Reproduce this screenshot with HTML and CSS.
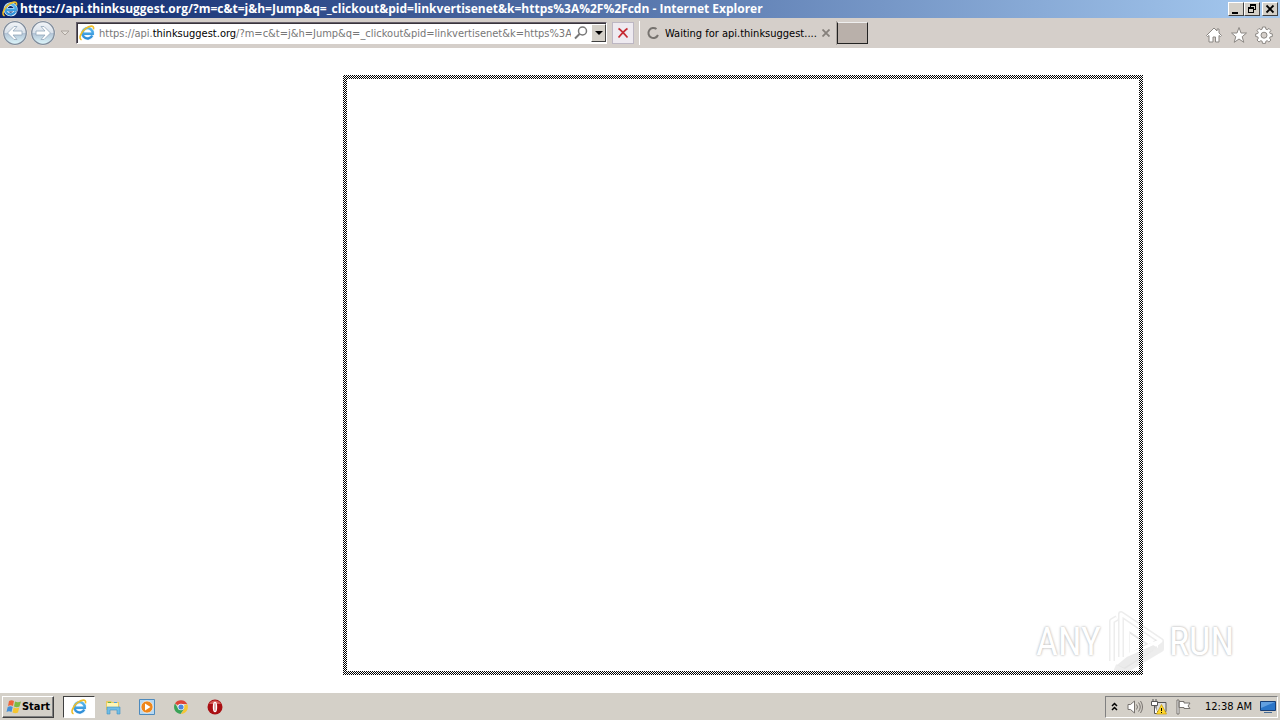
FILE: index.html
```html
<!DOCTYPE html>
<html lang="en">
<head>
<meta charset="utf-8">
<title>Internet Explorer</title>
<link rel="stylesheet" href="styles.css">
</head>
<body>
<svg class="defs" aria-hidden="true">
  <defs>
    <linearGradient id="ieBlue" x1="0" y1="0" x2="0" y2="1"><stop offset="0" stop-color="#58b8ee"/><stop offset="1" stop-color="#2c8bd6"/></linearGradient>
    <linearGradient id="glass" x1="0" y1="0" x2="0" y2="1"><stop offset="0" stop-color="#f4f6f9"/><stop offset=".48" stop-color="#d9e1ea"/><stop offset=".52" stop-color="#b3c4d6"/><stop offset="1" stop-color="#e0fbff"/></linearGradient>
    <symbol id="ie" viewBox="0 0 16 16">
      <path d="M13.300 10.600A5.200 5.200 0 1 1 13.800 8.700H4.500" fill="none" stroke="#e8f6ff" stroke-width="3.600"/>
      <path d="M13.300 10.600A5.200 5.200 0 1 1 13.800 8.700H4.500" fill="none" stroke="url(#ieBlue)" stroke-width="2.400"/>
      <path d="M2.600 14.800C-1 13.600 2 7.200 6.500 3.700c3.700-2.900 9-4.200 8 .6" fill="none" stroke="#f0bd28" stroke-width="1.600"/>
    </symbol>
  </defs>
</svg>
<div class="desktop">
  <header class="titlebar">
    <svg class="icon16"><use href="#ie"/></svg>
    <h1 class="title">https://api.thinksuggest.org/?m=c&amp;t=j&amp;h=Jump&amp;q=_clickout&amp;pid=linkvertisenet&amp;k=https%3A%2F%2Fcdn - Internet Explorer</h1>
    <div class="window-buttons">
      <button class="win-btn" aria-label="Minimize"><svg viewBox="0 0 14 12"><path d="M3 9h6v2H3z"/></svg></button>
      <button class="win-btn" aria-label="Restore"><svg viewBox="0 0 14 12"><path d="M5 1h6v6H9V6h1V3H6v1H5zM3 4h6v6H3zm1 2v3h4V6z" fill-rule="evenodd"/></svg></button>
      <button class="win-btn win-close" aria-label="Close"><svg viewBox="0 0 14 12"><path d="M3.500 2.500l7 7m0-7l-7 7" stroke="#000" stroke-width="1.800"/></svg></button>
    </div>
  </header>
  <nav class="toolbar">
    <div class="history">
      <button class="round" aria-label="Back"><svg viewBox="0 0 26 26"><circle cx="13" cy="13" r="12" fill="url(#glass)" stroke="#eeebe9"/><circle cx="13" cy="13" r="11.300" fill="none" stroke="#838e9c" stroke-width="1.300"/><path d="M12 6.500L5.500 13l6.500 6.500h3L11 15h9v-4h-9l4-4.500z" fill="#fff" stroke="#93a7ba" stroke-width=".8"/></svg></button>
      <button class="round" aria-label="Forward"><svg viewBox="0 0 26 26"><circle cx="13" cy="13" r="12" fill="url(#glass)" stroke="#eeebe9"/><circle cx="13" cy="13" r="11.300" fill="none" stroke="#838e9c" stroke-width="1.300"/><path d="M14 6.500l6.500 6.500-6.500 6.500h-3l4-4.500H6v-4h9l-4-4.500z" fill="#fff" stroke="#93a7ba" stroke-width=".8"/></svg></button>
      <button class="recent" aria-label="Recent pages"><svg viewBox="0 0 10 6"><path d="M1 1h8L5 5z" fill="#e4e0da" stroke="#aaa39d"/></svg></button>
    </div>
    <div class="address">
      <svg class="icon16"><use href="#ie"/></svg>
      <div class="url" role="textbox" aria-label="Address" contenteditable="true" spellcheck="false">https://api.<b>thinksuggest.org</b>/?m=c&amp;t=j&amp;h=Jump&amp;q=_clickout&amp;pid=linkvertisenet&amp;k=https%3A%2F%2Fcdn</div>
      <button class="search" aria-label="Search"><svg viewBox="0 0 16 16"><circle cx="9.500" cy="6" r="4" fill="none" stroke="#777" stroke-width="1.500"/><path d="M6.500 9L2 13.500" stroke="#777" stroke-width="2"/></svg></button>
      <button class="drop" aria-label="Show address list"><svg viewBox="0 0 8 4"><path d="M0 0h8L4 4z"/></svg></button>
    </div>
    <button class="stop" aria-label="Stop"><svg viewBox="0 0 12 12"><path d="M1.500 1.500c3 2 6 5.500 9 9M10.500 1.500c-3 2-6 5.500-9 9" fill="none" stroke="#c62a32" stroke-width="1.600"/></svg></button>
    <div class="tab">
      <svg class="spinner" viewBox="0 0 14 14"><path d="M10.500 3A5 5 0 1 0 12 9" fill="none" stroke="#77736f" stroke-width="2"/></svg>
      <span class="tab-title">Waiting for api.thinksuggest....</span>
      <button class="tab-close" aria-label="Close tab"><svg viewBox="0 0 8 8"><path d="M0.500 0.500l7 7m0-7l-7 7" stroke="#85807b" stroke-width="1.800"/></svg></button>
    </div>
    <button class="new-tab" aria-label="New tab"></button>
    <div class="tools">
      <button class="tool" aria-label="Home"><svg viewBox="0 0 18 18"><path d="M9 2L1.500 9.500l1 1L4 9.500V16h4v-5h2.500v5H14V9.500l1.500 1 1-1-2.500-2.500V3h-2v2z" fill="#fff" stroke="#8b8783"/></svg></button>
      <button class="tool" aria-label="Favorites"><svg viewBox="0 0 18 18"><path d="M9 1.500l2 5.500h5.500l-4.300 3.700 1.600 5.600L9 13l-4.800 3.300 1.600-5.600L1.500 7H7z" fill="#fff" stroke="#8b8783"/></svg></button>
      <button class="tool" aria-label="Tools"><svg viewBox="0 0 18 18"><path d="M7.500 1h3l.4 2.200 1.300.5L14 2.400 15.900 4.500l-1.300 1.800.5 1.200 2.200.4v2.600l-2.200.4-.5 1.300 1.300 1.800-2 2-1.700-1.300-1.300.5-.4 2.200h-3l-.4-2.200-1.300-.5L4 16l-2-2 1.300-1.800-.5-1.300L.7 10.500V7.900l2.100-.4.5-1.200L2 4.500l2-2.100 1.800 1.300 1.300-.5zM9 6.200a3 3 0 1 0 0 6 3 3 0 0 0 0-6z" fill="#fff" stroke="#8b8783" fill-rule="evenodd"/></svg></button>
    </div>
  </nav>
  <main class="page">
    <div class="watermark">
      <span>ANY</span>
      <svg viewBox="0 0 60 64"><g fill="none" stroke-linejoin="round"><path d="M7 51V11l5-3M16 47V4l40 27v8L19 61l-9-4" stroke="#d8d8d8" stroke-width="6" opacity=".45"/><path d="M23 46l29-17v9L20 59l-8-4z" fill="#ddd" opacity=".6"/><path d="M24 22v23l18-11z" stroke="#e6e6e6" stroke-width="2"/><path d="M7 51V11l5-3M16 47V4l40 27-5 4-28-17v27l31-14" stroke="#fff" stroke-width="3"/></g></svg>
      <span>RUN</span>
    </div>
    <div class="outline"></div>
  </main>
  <footer class="taskbar">
    <button class="start"><svg viewBox="0 0 16 16"><path d="M3 2c2-1 3-1 5 0L7 7C5 6 4 6 2 7z" fill="#ee6438"/><path d="M9 2.500c2 1 3.500 1 6 0L13.500 7.500c-2 1-3.500 1-5.500 0z" fill="#7dba42"/><path d="M1.700 8c2-1 3.500-1 5 0l-1.200 5c-2-1-3-1-5 0z" fill="#438fd8"/><path d="M7.700 8.500c2 1 3.500 1 5.500 0L12 13.500c-2 1-3.500 1-5.500 0z" fill="#f5c52f"/></svg>Start</button>
    <div class="launch">
      <button class="app active" aria-label="Internet Explorer"><svg><use href="#ie"/></svg></button>
      <button class="app" aria-label="Explorer"><svg viewBox="0 0 16 16"><path d="M1 2h5l1 1h7v8H1z" fill="#e9cb62"/><path d="M2 4h11v5H2z" fill="#fff5b5"/><path d="M3 3h3v1H3z" fill="#65b54c"/><path d="M9 3h3v1H9z" fill="#4d9fde"/><path d="M2 8h13v7h-3v-4H5v4H2z" fill="#70bde6" stroke="#3d91c2" stroke-width=".6"/></svg></button>
      <button class="app" aria-label="Media Player"><svg viewBox="0 0 16 16"><path d="M.5.500h15v15H.5z" fill="#b6d8f2" stroke="#4d8abd"/><circle cx="8" cy="8" r="6" fill="#ee861b" stroke="#fff" stroke-width=".6"/><path d="M6 4.500v7L11.500 8z" fill="#fff"/></svg></button>
      <button class="app" aria-label="Chrome"><svg viewBox="0 0 16 16"><path d="M8 8L2 4.500A7 7 0 0 1 14.200 5H8z" fill="#dd4437"/><path d="M8 8l6.200-3A7 7 0 0 1 8 15l3-5z" fill="#f5c634"/><path d="M8 8l3 2-3.500 5A7 7 0 0 1 2 4.500L5.500 10z" fill="#3aa257"/><circle cx="8" cy="8" r="3.300" fill="#fff"/><circle cx="8" cy="8" r="2.600" fill="#4c86db"/></svg></button>
      <button class="app" aria-label="Opera"><svg viewBox="0 0 16 16"><circle cx="8" cy="8" r="7.500" fill="#a90e12"/><path d="M2 5a7 7 0 0 1 12 0z" fill="#d45b57"/><ellipse cx="8" cy="8" rx="2.200" ry="5.300" fill="#fff"/><ellipse cx="8" cy="8" rx=".6" ry="4.300" fill="#c77"/></svg></button>
    </div>
    <div class="tray">
      <button class="chevron" aria-label="Show hidden icons"><svg viewBox="0 0 7 9"><path d="M1 4l2.500-2.500L6 4M1 8l2.500-2.500L6 8" fill="none" stroke="#000" stroke-width="1.500"/></svg></button>
      <svg class="icon16" viewBox="0 0 16 16"><path d="M1 5.500h2.500L7.500 2v12L3.500 10.500H1z" fill="#fff" stroke="#77736f"/><path d="M9.500 5.500q2 2.500 0 5M11.500 3.500q3.500 4.500 0 9M13.500 2q4 6 0 12" fill="none" stroke="#77736f"/></svg>
      <svg class="icon16" viewBox="0 0 16 16"><path d="M5 3.500h10v9H5z" fill="#ddd" stroke="#555"/><path d="M.5 2.500h6v4h-6zM3.500 7v7.500H7M2 0v2M5 0v2" fill="#fff" stroke="#555"/><path d="M10.500 5.500l5 9.500h-10z" fill="#ffd72c" stroke="#c79b00" stroke-width=".7"/><path d="M10 9h1v3h-1zM10 13h1v1h-1z" fill="#000"/></svg>
      <svg class="icon16" viewBox="0 0 16 16"><path d="M2 1h2v14H2zM4 2.500h5V4h6l-2 3 2 2.500H9V8.500H4z" fill="#fff" stroke="#77736f"/></svg>
      <time class="clock">12:38 AM</time>
      <svg class="icon16" viewBox="0 0 16 16"><path d="M.5 2.500h15v9H.5z" fill="#2b75c8" stroke="#173e77"/><path d="M1 3h14L1 9z" fill="#629fe0"/><path d="M4 13h8v1H4z" fill="#466b94"/></svg>
    </div>
  </footer>
</div>
</body>
</html>
```
FILE: styles.css
```css
* { box-sizing: border-box; }
body { margin: 0; font: 11px/14px "DejaVu Sans Condensed", "DejaVu Sans", sans-serif; color: #000; }
button { padding: 0; border: 0; background: none; font: inherit; color: inherit; display: flex; align-items: center; justify-content: center; }
svg { display: block; flex: none; }
.defs { position: absolute; width: 0; height: 0; }
.icon16 { width: 16px; height: 16px; }
.desktop { min-height: 100vh; display: flex; flex-direction: column; background: #fff; }
.titlebar { height: 18px; display: flex; align-items: center; gap: 2px; padding: 0 2px; background: linear-gradient(90deg, #0a246a, #a6caf0); }
.title { flex: 1; margin: 0; font: bold 12px/16px "Open Sans", sans-serif; color: #fff; white-space: nowrap; overflow: hidden; }
.window-buttons { display: flex; }
.win-btn { width: 16px; height: 14px; background: #d4d0c8; border: 1px solid; border-color: #fff #404040 #404040 #fff; }
.win-btn svg { width: 14px; height: 12px; }
.win-close { margin-left: 2px; }
.toolbar { height: 30px; display: flex; align-items: center; background: #d5cfca; }
.history { width: 76px; display: flex; align-items: center; padding-left: 2px; gap: 2px; }
.round svg { width: 26px; height: 26px; }
.recent { width: 14px; }
.recent svg { width: 10px; height: 6px; }
.address { width: 531px; height: 22px; display: flex; align-items: center; padding-left: 2px; background: #fff; border: 1px solid; border-color: #66606a #fff #fff #66606a; box-shadow: inset 1px 1px #39343c; }
.url { flex: 1; margin-left: 4px; min-width: 0; overflow: hidden; white-space: nowrap; line-height: 16px; padding-top: 2px; color: #777; outline: 0; }
.url b { font-weight: normal; color: #000; }
.search { width: 20px; }
.search svg { width: 16px; height: 16px; }
.drop { width: 15px; height: 18px; background: #d4d0c8; border: 1px solid; border-color: #fff #404040 #404040 #fff; }
.drop svg { width: 8px; height: 4px; }
.stop { width: 22px; height: 22px; margin: 0 5px; background: #eeeaf0; border: 1px solid #bdb7c3; }
.stop svg { width: 12px; height: 12px; }
.tab { width: 198px; height: 24px; display: flex; align-items: center; padding: 0 6px; border-left: 1px solid #fff; border-right: 1px solid #aaa49f; }
.spinner { width: 14px; height: 14px; margin-right: 5px; }
.tab-title { flex: 1; padding-top: 2px; white-space: nowrap; }
.tab-close svg { width: 8px; height: 8px; }
.new-tab { width: 31px; height: 22px; background: #b9b0aa; border: 1px solid; border-color: #eee #222 #222 #222; }
.tools { margin-left: auto; display: flex; gap: 7px; padding: 4px 7px 0 0; }
.tool svg { width: 18px; height: 18px; }
.page { flex: 1; position: relative; }
.outline { position: absolute; left: 343px; top: 27px; width: 800px; height: 600px; padding: 4px; background: repeating-conic-gradient(#000 0 25%, #fff 0 50%) 0 0 / 2px 2px; mask: linear-gradient(#000 0 0) content-box exclude, linear-gradient(#000 0 0); pointer-events: none; }
.watermark { position: absolute; right: 46px; bottom: 18px; display: flex; align-items: center; gap: 4px; font: 38px/64px "Roboto Condensed", "Liberation Sans Narrow", sans-serif; color: #fff; text-shadow: 0 0 2px #bbb, 0 0 3px #ccc; }
.watermark svg { width: 60px; height: 64px; }
.taskbar { height: 28px; display: flex; align-items: center; background: #d4d0c8; padding: 1px 2px 0; box-shadow: inset 0 1px #fff; }
.start { width: 52px; height: 22px; font-weight: bold; background: #d4d0c8; border: 1px solid; border-color: #fff #404040 #404040 #fff; box-shadow: inset -1px -1px #808080; }
.start svg { width: 16px; height: 16px; }
.launch { display: flex; gap: 2px; margin-left: 9px; }
.app { width: 32px; height: 22px; }
.app svg { width: 16px; height: 16px; }
.active { background: #fff; border: 1px solid; border-color: #404040 #fff #fff #404040; }
.tray { margin-left: auto; height: 22px; display: flex; align-items: center; padding: 0 1px 0 5px; gap: 8px; border: 1px solid; border-color: #808080 #fff #fff #808080; }
.chevron { margin-right: 1px; }
.chevron svg { width: 7px; height: 9px; }
.clock { margin-left: 6px; white-space: nowrap; }
```
